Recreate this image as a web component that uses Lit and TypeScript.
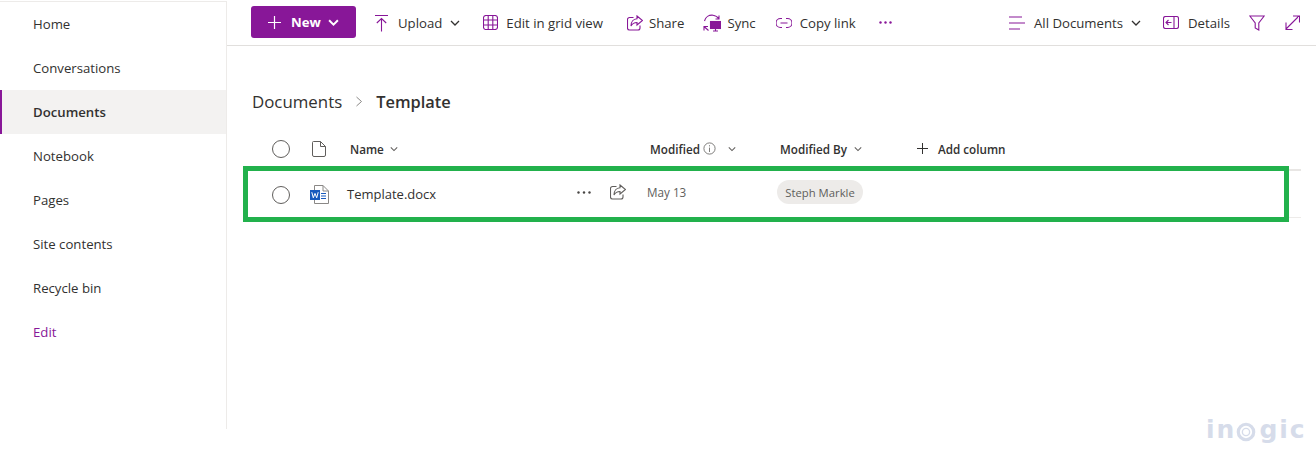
import { LitElement, html, css, svg } from "lit";
import { customElement } from "lit/decorators.js";

const P = "#881798";
const chev = (w = 10) => html`<svg class="chev" width=${w} height=${w} viewBox="0 0 10 10" fill="none" stroke="currentColor" stroke-width="1.3"><path d="M1 3 L5 7 L9 3"/></svg>`;
const ic = (w: number, h: number, body: unknown) => html`<svg width=${w} height=${h} viewBox="0 0 ${w} ${h}" fill="none" stroke=${P} stroke-width="1.1">${body}</svg>`;
const shareIcon = (stroke: string) => html`<svg width="16" height="16" viewBox="0 0 16 16" fill="none" stroke=${stroke} stroke-width="1.1"><path d="M6.5 2.5 H2.5 a2 2 0 0 0 -2 2 V13 a2 2 0 0 0 2 2 H11 a2 2 0 0 0 2 -2 V10.5"/><path d="M10 1 L15.5 5.5 L10 10 V7.5 C7 7.5 5.2 8.8 4 11 C4 7 6.5 4 10 3.8 Z"/></svg>`;

@customElement("app-root")
export class AppRoot extends LitElement {
  static styles = css`
    :host { display: block; width: 1316px; height: 460px; position: relative; overflow: hidden; background: #fff;
      font-family: "Open Sans", "Noto Sans", sans-serif; font-size: 13.2px; color: #323130; }
    .page { display: flex; height: 460px; align-items: flex-start; }
    nav { width: 226px; height: 427px; margin-top: 1px; border-top: 1px solid #edebe9; border-right: 1px solid #edebe9; flex: none; }
    .nav-item { height: 44px; display: flex; align-items: center; padding-left: 33px; }
    .nav-item.active { background: #f3f2f1; font-weight: 600; padding-left: 31px; border-left: 2px solid #881798; }
    .nav-item.edit { color: #881798; }
    main { flex: 1; min-width: 0; }
    .toolbar { height: 45px; border-bottom: 1px solid #e1dfdd; display: flex; align-items: center; padding: 0 16px 0 24px; }
    .toolbar > * { flex: none; }
    .new { width: 105px; height: 32px; box-sizing: border-box; margin-top: -1px; background: #881798; color: #fff; border-radius: 3px; display: flex; align-items: center;
      padding-left: 17px; font-weight: 700; }
    .new .lbl { margin: 0 7px 0 10px; }
    .tb { display: flex; align-items: center; white-space: nowrap; }
    .tb svg:first-child { margin-right: 9px; }
    .tb .chev { margin-left: 8px; }
    .upload { margin-left: 18px; }
    .grid { margin-left: 23px; }
    .grid svg:first-child { margin-right: 8px; }
    .share { margin-left: 24px; }
    .share svg:first-child { margin-right: 6px; }
    .sync { margin-left: 19px; }
    .sync svg:first-child { margin-right: 6px; }
    .link { margin-left: 20px; }
    .link svg:first-child { margin-right: 8px; }
    .more { margin-left: 23px; display: flex; margin-top: -1px; }
    .spacer { flex: 1; }
    .details { margin-left: 22px; }
    .filter { margin-left: 19px; display: flex; }
    .expand { margin-left: 20px; display: flex; }
    .crumb { display: flex; align-items: center; margin: 43px 0 0 25px; height: 24px; font-size: 16.85px; }
    .crumb svg { margin: 0 13px 0 13px; }
    .crumb b { font-weight: 600; font-size: 16.4px; }
    .list { margin: 17px 15px 0 16px; position: relative; }
    .cols { display: grid; align-items: center; }
    .head { grid-template-columns: 49px 38px 300px 130px 136px 1fr; height: 41px; padding-bottom: 2px; border-bottom: 2px solid #e8e6e4; font-size: 11.7px; font-weight: 600; color: #323130; padding-left: 20px; box-sizing: border-box; }
    .row { grid-template-columns: 47px 37px 230px 33px 37px 130px 1fr; height: 47px; padding-bottom: 4px; border-bottom: 1px solid #edebe9; box-sizing: border-box; padding-left: 20px; position: relative; }
    .cell { display: flex; align-items: center; white-space: nowrap; }
    .low { margin-top: 5px; }
    .head .chev { color: #605e5c; margin-left: 9px; }
    .head .name .chev { margin-left: 6px; }
    .info { margin: 0 0 0 3px; }
    .info + .chev { margin-left: 12px; }
    .by .chev { margin-left: 7px; }
    .add { padding-left: 1px; }
    .add svg { margin-right: 10px; }
    .circle { width: 18px; height: 18px; box-sizing: border-box; border: 1px solid #605e5c; border-radius: 50%; margin-left: 9px; }
    .fname { font-size: 13px; color: #323130; margin-top: 4px; }
    .date { font-size: 11.7px; color: #605e5c; }
    .pill { height: 24px; width: 86px; border-radius: 12px; background: #edebe9; color: #605e5c; font-size: 11.3px; display: flex; align-items: center; justify-content: center; box-sizing: border-box; }
    .frame { position: absolute; left: 0; top: -5px; width: 1046px; height: 56px; box-sizing: border-box; border: 5px solid #22b14c; pointer-events: none; }
    .mark { position: absolute; left: 1206px; top: 415px; display: flex; align-items: center; font-family: "DejaVu Sans", sans-serif; font-size: 25px; font-weight: 700; color: #d6dcea; letter-spacing: 2px; line-height: 30px; white-space: nowrap; }
    .mark svg { margin: 3px 3px 0 0; }
  `;

  render() {
    const navItems = ["Home", "Conversations", "Documents", "Notebook", "Pages", "Site contents", "Recycle bin", "Edit"];
    return html`
      <div class="page">
        <nav>
          ${navItems.map((n) => html`<div class="nav-item ${n === "Documents" ? "active" : ""} ${n === "Edit" ? "edit" : ""}">${n}</div>`)}
        </nav>
        <main>
          <div class="toolbar">
            <div class="new">
              <svg width="13" height="13" viewBox="0 0 13 13" stroke="#fff" stroke-width="1.2"><path d="M6.5 0 V13 M0 6.5 H13"/></svg>
              <span class="lbl">New</span>
              <svg width="11" height="11" viewBox="0 0 10 10" fill="none" stroke="#fff" stroke-width="1.8"><path d="M1 3 L5 7 L9 3"/></svg>
            </div>
            <div class="tb upload">
              ${ic(15, 18, svg`<path d="M1 1.5 H14 M7.5 17.5 V4.5 M2.8 9 L7.5 4.5 L12.2 9"/>`)}
              Upload ${chev()}
            </div>
            <div class="tb grid">
              ${ic(15, 15, svg`<rect x="0.5" y="0.5" width="14" height="14" rx="2.5"/><path d="M0.5 5 H14.5 M0.5 10 H14.5 M5.2 0.5 V14.5 M9.8 0.5 V14.5"/>`)}
              <span>Edit in grid view</span>
            </div>
            <div class="tb share">${shareIcon(P)} Share</div>
            <div class="tb sync">
              ${ic(18, 18, svg`<path d="M1.5 7 C2.5 3 6 0.8 10 1.2 C12.5 1.5 14.5 2.8 15.8 4.8 M16 1.5 V5 H12.5"/><path d="M1 16.5 L1 12.5 H5 M1 12.5 L5.5 16.5"/><rect x="7.5" y="7.5" width="10" height="7" fill="${P}"/><path d="M10 17 H15 M12.5 14 V17"/>`)}
              Sync
            </div>
            <div class="tb link">
              ${ic(16, 12, svg`<path d="M6 1.5 H4.5 a4 4 0 0 0 0 9 H6 M10 1.5 H11.5 a4 4 0 0 1 0 9 H10 M4.5 6 H11.5"/>`)}
              Copy link
            </div>
            <div class="more">
              <svg width="13" height="3" viewBox="0 0 13 3" fill=${P}><circle cx="1.5" cy="1.5" r="1.2"/><circle cx="6.5" cy="1.5" r="1.2"/><circle cx="11.5" cy="1.5" r="1.2"/></svg>
            </div>
            <div class="spacer"></div>
            <div class="tb allDocs">
              ${ic(16, 14, svg`<path d="M0 1 H13 M0 7 H16 M0 13 H11"/>`)}
              All Documents ${chev()}
            </div>
            <div class="tb details">
              ${ic(16, 13, svg`<rect x="0.5" y="0.5" width="15" height="12" rx="2"/><path d="M11 0.5 V12.5 M8.5 6.5 H3 M5.5 4 L3 6.5 L5.5 9"/>`)}
              Details
            </div>
            <div class="filter">
              ${ic(16, 16, svg`<path d="M0.8 1 H15.2 L9.8 8 V15 L6.2 13 V8 Z"/>`)}
            </div>
            <div class="expand">
              ${ic(15, 15, svg`<path d="M1 14 L14 1 M8 1 H14.5 V7.5 M1 7.5 V14.5 H7.5"/>`)}
            </div>
          </div>
          <div class="crumb">
            <span>Documents</span>
            <svg width="8" height="11" viewBox="0 0 8 11" fill="none" stroke="#8a8886" stroke-width="1"><path d="M1.5 1 L6.5 5.5 L1.5 10"/></svg>
            <b>Template</b>
          </div>
          <div class="list">
            <div class="cols head">
              <div class="cell"><span class="circle"></span></div>
              <div class="cell"><svg width="14" height="16" viewBox="0 0 14 16" fill="none" stroke="#605e5c" stroke-width="1"><path d="M1.5 .5 H8.5 L13.5 5.5 V14 a1.5 1.5 0 0 1 -1.5 1.5 H2 a1.5 1.5 0 0 1 -1.5 -1.5 V1.5 a1 1 0 0 1 1 -1 Z M8.5 .5 V5.5 H13.5"/></svg></div>
              <div class="cell name">Name ${chev(8)}</div>
              <div class="cell">Modified
                <svg class="info" width="13" height="13" viewBox="0 0 13 13" fill="none" stroke="#605e5c" stroke-width="0.8"><circle cx="6.5" cy="6.5" r="5.6"/><path d="M6.5 5.6 V10 M6.5 3.2 V4.4"/></svg>
                ${chev(8)}
              </div>
              <div class="cell by">Modified By ${chev(8)}</div>
              <div class="cell add">
                <svg width="11" height="11" viewBox="0 0 11 11" stroke="#323130" stroke-width="1"><path d="M5.5 0 V11 M0 5.5 H11"/></svg>
                Add column
              </div>
            </div>
            <div class="cols row">
              <div class="cell low"><span class="circle"></span></div>
              <div class="cell low">
                <svg width="19" height="19" viewBox="0 0 19 19">
                  <path d="M4.5 .5 H13 L18.5 6 V18.5 H4.5 Z" fill="#fff" stroke="#8a8886"/>
                  <path d="M13 .5 V6 H18.5" fill="none" stroke="#8a8886"/>
                  <path d="M11 8.5 H16 M11 11 H16 M11 13.5 H16" stroke="#185abd"/>
                  <rect x="0" y="5" width="10" height="10" fill="#185abd"/>
                  <path d="M1.8 7.2 L3.3 12.8 L5 8.4 L6.7 12.8 L8.2 7.2" fill="none" stroke="#fff" stroke-width="1"/>
                </svg>
              </div>
              <div class="cell fname">Template.docx</div>
              <div class="cell">
                <svg width="14" height="3" viewBox="0 0 14 3" fill="#484644"><circle cx="1.5" cy="1.5" r="1.2"/><circle cx="7" cy="1.5" r="1.2"/><circle cx="12.5" cy="1.5" r="1.2"/></svg>
              </div>
              <div class="cell">${shareIcon("#605e5c")}</div>
              <div class="cell date">May 13</div>
              <div class="cell"><span class="pill">Steph Markle</span></div>
              <div class="frame"></div>
            </div>
          </div>
        </main>
      </div>
      <div class="mark">
        <span>in</span>
        <svg width="20" height="20" viewBox="0 0 22 22" fill="none" stroke="#d6dcea"><circle cx="11" cy="11" r="8.5" stroke-width="3.5"/><circle cx="11" cy="11" r="4" stroke-width="1.5"/></svg>
        <span>gic</span>
      </div>
    `;
  }
}
